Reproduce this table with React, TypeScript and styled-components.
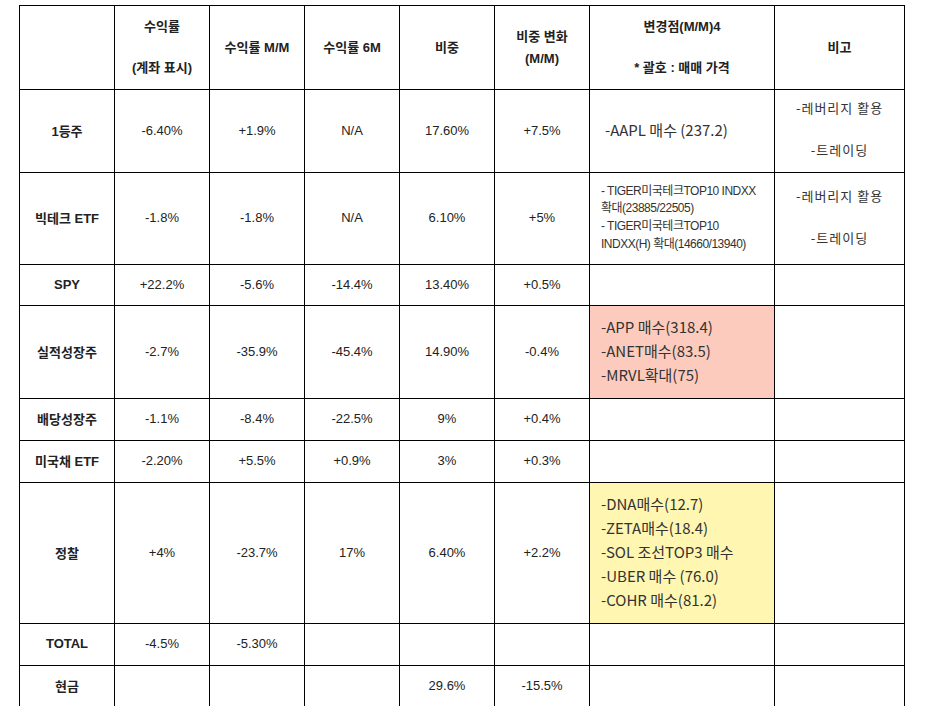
import React from "react";
import styled, { createGlobalStyle } from "styled-components";

const GlobalStyle = createGlobalStyle`
  html, body { margin: 0; padding: 0; background: #fff; }
  body { font-family: "Liberation Sans", "Noto Sans CJK KR", Arial, sans-serif; color: #222; }
`;

const Page = styled.div`
  padding: 5px 0 0 19px;
`;

const Table = styled.table`
  border-collapse: separate;
  border-spacing: 0;
  table-layout: fixed;
  width: 886px;
  border-top: 1px solid #000;
  border-left: 1px solid #000;
  font-family: "Liberation Sans", "Noto Sans CJK KR", Arial, sans-serif;
  font-size: 13px;
  color: #222;
`;

const Col = styled.col<{ $w: number }>`
  width: ${(p) => p.$w}px;
`;

const Row = styled.tr<{ $h: number }>`
  height: ${(p) => p.$h}px;
`;

const cellBase = `
  box-sizing: border-box;
  border-right: 1px solid #000;
  border-bottom: 1px solid #000;
  padding: 0;
  vertical-align: middle;
  text-align: center;
`;

const HeadCell = styled.th`
  ${cellBase}
  font-weight: 700;
  line-height: 20px;
`;

const LabelCell = styled.td`
  ${cellBase}
  padding-bottom: 2px;
  font-weight: 700;
`;

const NumCell = styled.td`
  ${cellBase}
  padding-bottom: 2px;
  font-weight: 400;
`;

const NoteCell = styled.td<{ $bg?: string; $pad: number; $size: number; $arial?: boolean }>`
  ${cellBase}
  text-align: left;
  padding-left: ${(p) => p.$pad}px;
  padding-bottom: ${(p) => (p.$arial ? 1 : 3)}px;
  background: ${(p) => p.$bg ?? "transparent"};
  font-family: ${(p) =>
    p.$arial
      ? `"Liberation Sans", "Noto Sans CJK KR", Arial, sans-serif`
      : `"Noto Sans CJK KR", "Noto Sans", sans-serif`};
  font-size: ${(p) => p.$size}px;
  letter-spacing: ${(p) => (p.$arial ? "-0.5px" : "0")};
  color: #333;
`;

const Line = styled.div<{ $lh: number }>`
  white-space: nowrap;
  height: ${(p) => p.$lh}px;
  line-height: ${(p) => p.$lh}px;
`;

const RemarkCell = styled.td`
  ${cellBase}
  padding-bottom: 5px;
  font-family: "Noto Sans CJK KR", "Noto Sans", sans-serif;
  font-size: 13px;
  letter-spacing: 1px;
  color: #333;
`;

type Note = {
  lines: string[];
  bg?: string;
  pad: number;
  size: number;
  lh: number;
  arial?: boolean;
};

type RowData = {
  label: string;
  h: number;
  values: string[];
  note?: Note;
  remark?: boolean;
};

const remarkLines = ["-레버리지 활용", "", "-트레이딩"];

const rows: RowData[] = [
  {
    label: "1등주",
    h: 83,
    values: ["-6.40%", "+1.9%", "N/A", "17.60%", "+7.5%"],
    note: { lines: ["-AAPL 매수 (237.2)"], pad: 15, size: 15, lh: 24 },
    remark: true,
  },
  {
    label: "빅테크 ETF",
    h: 92,
    values: ["-1.8%", "-1.8%", "N/A", "6.10%", "+5%"],
    note: {
      lines: [
        "- TIGER미국테크TOP10 INDXX",
        "확대(23885/22505)",
        "- TIGER미국테크TOP10",
        "INDXX(H) 확대(14660/13940)",
      ],
      pad: 11,
      size: 12,
      lh: 17.6,
      arial: true,
    },
    remark: true,
  },
  { label: "SPY", h: 41, values: ["+22.2%", "-5.6%", "-14.4%", "13.40%", "+0.5%"] },
  {
    label: "실적성장주",
    h: 93,
    values: ["-2.7%", "-35.9%", "-45.4%", "14.90%", "-0.4%"],
    note: {
      lines: ["-APP 매수(318.4)", "-ANET매수(83.5)", "-MRVL확대(75)"],
      bg: "#fdcbbd",
      pad: 11,
      size: 15,
      lh: 24,
    },
  },
  { label: "배당성장주", h: 42, values: ["-1.1%", "-8.4%", "-22.5%", "9%", "+0.4%"] },
  { label: "미국채 ETF", h: 42, values: ["-2.20%", "+5.5%", "+0.9%", "3%", "+0.3%"] },
  {
    label: "정찰",
    h: 141,
    values: ["+4%", "-23.7%", "17%", "6.40%", "+2.2%"],
    note: {
      lines: [
        "-DNA매수(12.7)",
        "-ZETA매수(18.4)",
        "-SOL 조선TOP3 매수",
        "-UBER 매수 (76.0)",
        "-COHR 매수(81.2)",
      ],
      bg: "#fff6b1",
      pad: 11,
      size: 15,
      lh: 24,
    },
  },
  { label: "TOTAL", h: 42, values: ["-4.5%", "-5.30%", "", "", ""] },
  { label: "현금", h: 42, values: ["", "", "", "29.6%", "-15.5%"] },
];

const widths = [95, 95, 95, 95, 95, 95, 185, 130];

function MultiLine({ lines, lh }: { lines: string[]; lh: number }) {
  return (
    <>
      {lines.map((l, i) => (
        <Line key={i} $lh={lh}>
          {l === "" ? "\u00a0" : l}
        </Line>
      ))}
    </>
  );
}

export default function App() {
  return (
    <>
      <GlobalStyle />
      <Page>
        <Table>
          <colgroup>
            {widths.map((w, i) => (
              <Col key={i} $w={w} />
            ))}
          </colgroup>
          <thead>
            <Row $h={84}>
              <HeadCell />
              <HeadCell>
                <MultiLine lh={20.5} lines={["수익률", "", "(계좌 표시)"]} />
              </HeadCell>
              <HeadCell>수익률 M/M</HeadCell>
              <HeadCell>수익률 6M</HeadCell>
              <HeadCell>비중</HeadCell>
              <HeadCell>
                <MultiLine lh={22} lines={["비중 변화", "(M/M)"]} />
              </HeadCell>
              <HeadCell>
                <MultiLine lh={20.5} lines={["변경점(M/M)4", "", "* 괄호 : 매매 가격"]} />
              </HeadCell>
              <HeadCell>비고</HeadCell>
            </Row>
          </thead>
          <tbody>
            {rows.map((r) => (
              <Row key={r.label} $h={r.h}>
                <LabelCell>{r.label}</LabelCell>
                {r.values.map((v, i) => (
                  <NumCell key={i}>{v}</NumCell>
                ))}
                {r.note ? (
                  <NoteCell
                    $bg={r.note.bg}
                    $pad={r.note.pad}
                    $size={r.note.size}
                    $arial={r.note.arial}
                  >
                    <MultiLine lh={r.note.lh} lines={r.note.lines} />
                  </NoteCell>
                ) : (
                  <NumCell />
                )}
                {r.remark ? (
                  <RemarkCell>
                    <MultiLine lh={21} lines={remarkLines} />
                  </RemarkCell>
                ) : (
                  <NumCell />
                )}
              </Row>
            ))}
          </tbody>
        </Table>
      </Page>
    </>
  );
}
